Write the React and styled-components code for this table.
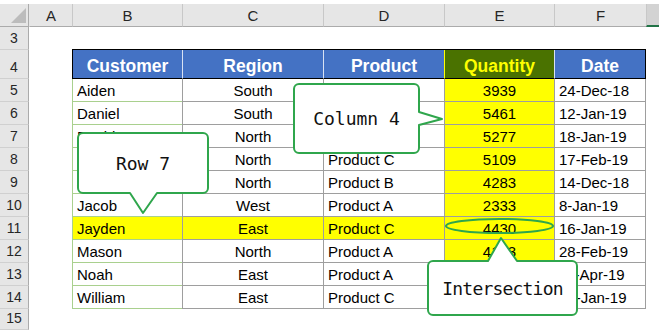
import React from "react";
import styled, { createGlobalStyle } from "styled-components";

const GlobalStyle = createGlobalStyle`
  html, body {
    margin: 0;
    padding: 0;
    background: #ffffff;
  }
  body {
    width: 659px;
    height: 330px;
    overflow: hidden;
    font-family: "Liberation Sans", Arial, sans-serif;
  }
`;

const GRID = "#9e9e9e";
const BGREEN = "#a9d08e";
const YELLOW = "#ffff00";
const BLUE = "#4472c4";
const QGREEN = "#4a7200";
const CALLOUT = "#2fa64c";

const LETTERS = ["A", "B", "C", "D", "E", "F", ""];
const HEAD = ["Customer", "Region", "Product", "Quantity", "Date"];
const ALIGN = ["left", "center", "left", "center", "left"];
const ROWS = [
  ["Aiden", "South", "Product A", "3939", "24-Dec-18"],
  ["Daniel", "South", "Product B", "5461", "12-Jan-19"],
  ["David", "North", "Product A", "5277", "18-Jan-19"],
  ["Ethan", "North", "Product C", "5109", "17-Feb-19"],
  ["Jackson", "North", "Product B", "4283", "14-Dec-18"],
  ["Jacob", "West", "Product A", "2333", "8-Jan-19"],
  ["Jayden", "East", "Product C", "4430", "16-Jan-19"],
  ["Mason", "North", "Product A", "4173", "28-Feb-19"],
  ["Noah", "East", "Product A", "3621", "11-Apr-19"],
  ["William", "East", "Product C", "2986", "23-Jan-19"],
];

const Page = styled.div`
  position: relative;
  padding-top: 4px;
  height: 326px;
`;

const Sheet = styled.div`
  display: grid;
  grid-template-columns: 29px 43px 110px 141px 121px 110px 92px 1fr;
  grid-template-rows: 23px 23px 29px repeat(10, 23px) 1fr;
  height: 100%;
`;

const Corner = styled.div`
  position: relative;
  box-sizing: border-box;
  background: #e6e6e6;
  border-right: 1px solid #ababab;
  border-bottom: 1px solid #ababab;
  &::after {
    content: "";
    position: absolute;
    right: 2px;
    bottom: 3px;
    width: 15px;
    height: 15px;
    background: #bcbcbc;
    clip-path: polygon(100% 0, 100% 100%, 0 100%);
  }
`;

const ColHead = styled.div`
  box-sizing: border-box;
  display: flex;
  align-items: center;
  justify-content: center;
  background: ${(p) => (p.$selected ? "#d3d3d3" : "#e6e6e6")};
  border-left: 1px solid ${(p) => (p.$first ? "transparent" : "#c8c8c8")};
  border-bottom: ${(p) => (p.$selected ? "2px solid #217346" : "1px solid #ababab")};
  color: #262626;
  font-size: 15px;
  padding-top: 1px;
`;

const RowHead = styled.div`
  box-sizing: border-box;
  display: flex;
  align-items: flex-end;
  justify-content: center;
  padding-bottom: 4px;
  background: #e6e6e6;
  border-right: 1px solid #ababab;
  border-bottom: 1px solid #d0d0d0;
  color: #262626;
  font-size: 14px;
  line-height: 1;
`;

const Blank = styled.div`
  box-sizing: border-box;
  background: #ffffff;
  border-bottom: ${(p) => (p.$bottom ? `1px solid ${p.$bottom}` : "none")};
`;

const Cell = styled.div`
  box-sizing: border-box;
  display: flex;
  align-items: flex-end;
  justify-content: ${(p) => (p.$align === "center" ? "center" : "flex-start")};
  padding: 0 4px 3px;
  background: ${(p) => p.$bg || "#ffffff"};
  color: #000000;
  font-size: 15px;
  line-height: 1;
  white-space: nowrap;
  overflow: hidden;
  border-left: 1px solid ${(p) => p.$left || GRID};
  border-right: ${(p) => (p.$right ? `1px solid ${p.$right}` : "none")};
  border-bottom: 1px solid ${(p) => p.$bottom || GRID};
`;

const HeadCell = styled(Cell)`
  justify-content: center;
  font-weight: bold;
  font-size: 17.5px;
  color: ${(p) => p.$color || "#ffffff"};
  padding-bottom: 3px;
`;

const Bubble = styled.div`
  position: absolute;
  left: ${(p) => p.$x}px;
  top: ${(p) => p.$y}px;
  width: ${(p) => p.$w}px;
  height: ${(p) => p.$h}px;
  box-sizing: border-box;
  padding: ${(p) => p.$pad};
  display: flex;
  align-items: center;
  justify-content: center;
  svg {
    position: absolute;
    inset: 0;
  }
`;

const BubbleText = styled.span`
  position: relative;
  font-family: "DejaVu Sans Mono", monospace;
  font-size: 18px;
  letter-spacing: ${(p) => (p.$tight ? "-0.8px" : "0")};
  color: #111111;
  white-space: nowrap;
`;

const Ring = styled.svg`
  position: absolute;
  left: 443px;
  top: 216px;
`;

const Callout = ({ x, y, w, h, pad, path, tight, children }) => (
  <Bubble $x={x} $y={y} $w={w} $h={h} $pad={pad}>
    <svg width={w} height={h} viewBox={`0 0 ${w} ${h}`}>
      <path d={path} fill="#ffffff" stroke={CALLOUT} strokeWidth="2" strokeLinejoin="round" />
    </svg>
    <BubbleText $tight={tight}>{children}</BubbleText>
  </Bubble>
);

function buildCells() {
  const cells = [<Corner key="corner" />];
  LETTERS.forEach((l, i) => {
    cells.push(
      <ColHead key={`h${i}`} $first={i === 0} $selected={i === 6}>
        {l}
      </ColHead>
    );
  });

  for (let r = 3; r <= 15; r++) {
    cells.push(<RowHead key={`r${r}`}>{r}</RowHead>);
    cells.push(<Blank key={`a${r}`} />);

    if (r === 3) {
      for (let c = 0; c < 5; c++) cells.push(<Blank key={`c${r}-${c}`} $bottom="#000" />);
    } else if (r === 4) {
      const lefts = ["#000", "#d9e2f3", "#d9e2f3", YELLOW, "#d9e2f3"];
      HEAD.forEach((t, c) => (
        cells.push(
          <HeadCell
            key={`c${r}-${c}`}
            $bg={c === 3 ? QGREEN : BLUE}
            $color={c === 3 ? YELLOW : "#fff"}
            $left={lefts[c]}
            $right={c === 4 ? "#000" : null}
            $bottom="#000"
          >
            {t}
          </HeadCell>
        )
      ));
    } else if (r <= 14) {
      const row = ROWS[r - 5];
      row.forEach((t, c) => {
        let bg = "#fff";
        if (c === 3) bg = YELLOW;
        if (r === 11 && c < 4) bg = YELLOW;
        cells.push(
          <Cell
            key={`c${r}-${c}`}
            $align={ALIGN[c]}
            $bg={bg}
            $left={c === 0 ? BGREEN : GRID}
            $right={c === 4 ? GRID : null}
            $bottom={c === 0 ? BGREEN : GRID}
          >
            {t}
          </Cell>
        );
      });
    } else {
      for (let c = 0; c < 5; c++) cells.push(<Blank key={`c${r}-${c}`} />);
    }
    cells.push(<Blank key={`g${r}`} />);
  }
  return cells;
}

export default function App() {
  return (
    <>
      <GlobalStyle />
      <Page>
        <Sheet>{buildCells()}</Sheet>

        <Ring width="114" height="21" viewBox="0 0 114 21">
          <ellipse cx="56.5" cy="10" rx="53.5" ry="7" fill="none" stroke={CALLOUT} strokeWidth="2" />
        </Ring>

        <Callout
          x={292}
          y={82}
          w={152}
          h={74}
          pad="2px 25px 3px 2px"
          path="M7,2 H122 A5,5 0 0 1 127,7 V30 L150,37 L127,43 V66 A5,5 0 0 1 122,71 H7 A5,5 0 0 1 2,66 V7 A5,5 0 0 1 7,2 Z"
        >
          Column 4
        </Callout>

        <Callout
          x={76}
          y={131}
          w={134}
          h={84}
          pad="2px 2px 22px 2px"
          path="M7,2 H127 A5,5 0 0 1 132,7 V57 A5,5 0 0 1 127,62 H81 L67,82 L54,62 H7 A5,5 0 0 1 2,57 V7 A5,5 0 0 1 7,2 Z"
        >
          Row 7
        </Callout>

        <Callout
          x={426}
          y={236}
          w={153}
          h={81}
          pad="25px 2px 2px 2px"
          tight
          path="M7,25 H62 L75,2 L91,25 H146 A5,5 0 0 1 151,30 V74 A5,5 0 0 1 146,79 H7 A5,5 0 0 1 2,74 V30 A5,5 0 0 1 7,25 Z"
        >
          Intersection
        </Callout>
      </Page>
    </>
  );
}
